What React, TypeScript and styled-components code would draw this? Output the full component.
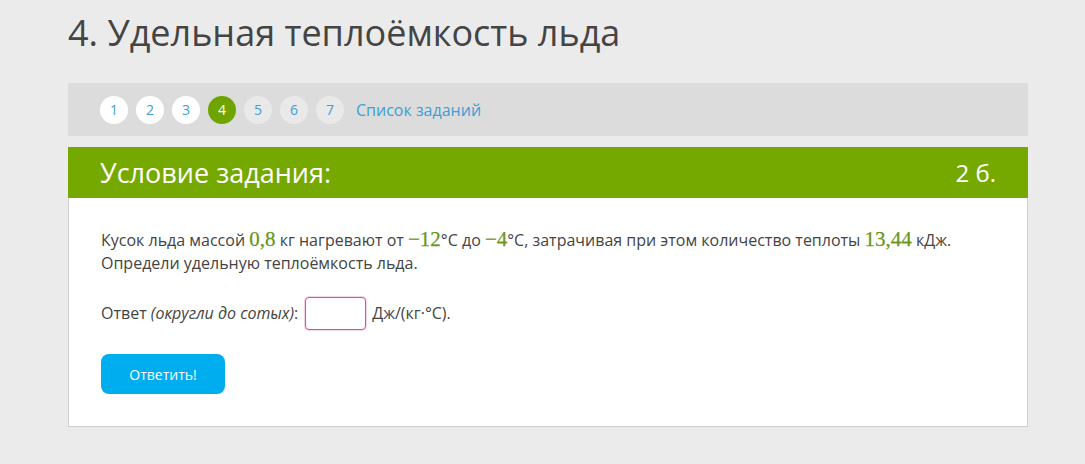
import styled, { createGlobalStyle } from 'styled-components'

const GlobalStyle = createGlobalStyle`
  html, body {
    margin: 0;
    padding: 0;
    background: #ebebeb;
  }
  body {
    font-family: 'Open Sans', 'Noto Sans', sans-serif;
    color: #444;
  }
`

const Page = styled.div`
  width: 960px;
  margin: 0 0 0 68px;
  padding-top: 9px;
`

const Title = styled.h1`
  margin: 0;
  font-size: 36px;
  line-height: 48px;
  font-weight: 400;
  color: #444;
`

const Steps = styled.nav`
  margin-top: 26px;
  height: 53px;
  background: #dcdcdc;
  display: flex;
  align-items: center;
  gap: 8px;
  padding-left: 32px;
`

const Step = styled.a<{ $state: 'done' | 'current' | 'todo' }>`
  width: 28px;
  height: 28px;
  border-radius: 50%;
  display: flex;
  align-items: center;
  justify-content: center;
  font-size: 14px;
  text-decoration: none;
  color: ${(p) => (p.$state === 'current' ? '#fff' : '#3d9fd6')};
  background: ${(p) =>
    p.$state === 'current' ? '#6fa400' : p.$state === 'done' ? '#fff' : '#e9e9e9'};
`

const StepsLink = styled.a`
  margin-left: 4px;
  font-size: 16px;
  color: #3d9fd6;
  text-decoration: none;
`

const Card = styled.section`
  margin-top: 11px;
  background: #fff;
  border: 1px solid #cfcfcf;
  border-top: none;
`

const CardHead = styled.header`
  height: 51px;
  background: #76a900;
  color: #fff;
  display: flex;
  align-items: center;
  justify-content: space-between;
  padding: 0 32px;
  margin: 0 -1px;
  font-size: 27px;
`

const Points = styled.span`
  font-size: 24px;
  font-stretch: 90%;
`

const CardBody = styled.div`
  padding: 30px 32px 32px 32px;
  font-size: 16px;
  line-height: 23px;
  color: #444;
`

const Num = styled.span`
  font-family: 'Liberation Serif', 'DejaVu Serif', serif;
  font-size: 21px;
  color: #689619;
  -webkit-text-stroke: 0.25px #689619;
`

const AnswerRow = styled.div`
  margin-top: 22px;
  display: flex;
  align-items: center;
  gap: 6px;
`

const Hint = styled.i`
  font-style: italic;
`

const Input = styled.input`
  width: 61px;
  height: 33px;
  box-sizing: border-box;
  background: #fff;
  border: 1px solid #d9529f;
  box-shadow: 0 0 0 1px rgba(217, 82, 159, 0.25);
  border-radius: 4px;
  outline: none;
  margin-left: 1px;
`

const Submit = styled.button`
  margin-top: 24px;
  width: 124px;
  height: 40px;
  border: none;
  border-radius: 8px;
  background: #00aeef;
  color: #fff;
  font-family: 'Open Sans', sans-serif;
  font-size: 14px;
  cursor: pointer;
`

const steps: Array<'done' | 'current' | 'todo'> = ['done', 'done', 'done', 'current', 'todo', 'todo', 'todo']

export default function App(): JSX.Element {
  return (
    <>
      <GlobalStyle />
      <Page>
        <Title>4. Удельная теплоёмкость льда</Title>
        <Steps>
          {steps.map((state, i) => (
            <Step key={i} href="#" $state={state}>
              {i + 1}
            </Step>
          ))}
          <StepsLink href="#">Список заданий</StepsLink>
        </Steps>
        <Card>
          <CardHead>
            <span>Условие задания:</span>
            <Points>2 б.</Points>
          </CardHead>
          <CardBody>
            <div>
              Кусок льда массой <Num>0,8</Num> кг нагревают от <Num>−12</Num>°C до <Num>−4</Num>°C,
              затрачивая при этом количество теплоты <Num>13,44</Num> кДж.
              <br />
              Определи удельную теплоёмкость льда.
            </div>
            <AnswerRow>
              <span>
                Ответ <Hint>(округли до сотых)</Hint>:
              </span>
              <Input type="text" />
              <span>Дж/(кг·°C).</span>
            </AnswerRow>
            <Submit type="button">Ответить!</Submit>
          </CardBody>
        </Card>
      </Page>
    </>
  )
}
